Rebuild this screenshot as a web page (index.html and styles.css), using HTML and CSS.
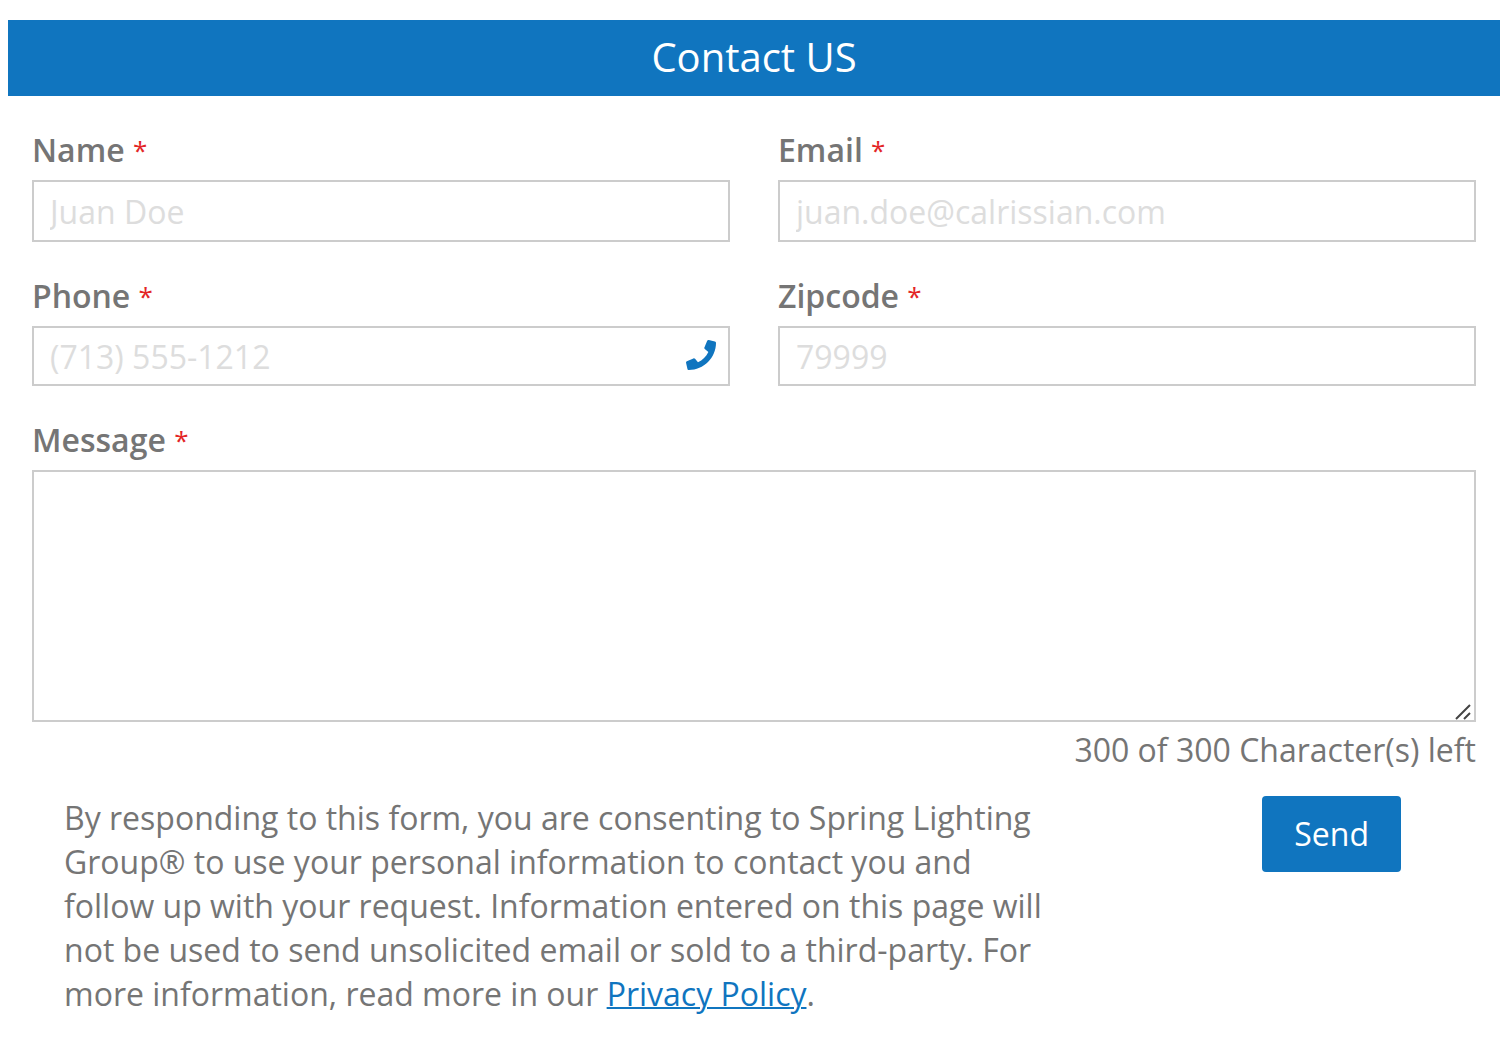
FILE: index.html
```html
<!DOCTYPE html>
<html lang="en">
<head>
<meta charset="utf-8">
<title>Contact US</title>
<link rel="stylesheet" href="styles.css">
</head>
<body>
<main class="contact">
  <h1 class="contact-title">Contact US</h1>
  <form class="contact-form">
    <div class="fields">
      <div class="field">
        <label class="label" for="name">Name <span class="required">*</span></label>
        <input class="control control-tall" id="name" type="text" placeholder="Juan Doe">
      </div>
      <div class="field">
        <label class="label" for="email">Email <span class="required">*</span></label>
        <input class="control control-tall" id="email" type="email" placeholder="juan.doe@calrissian.com">
      </div>
      <div class="field">
        <label class="label" for="phone">Phone <span class="required">*</span></label>
        <div class="control-wrap">
          <input class="control" id="phone" type="tel" placeholder="(713) 555-1212">
          <svg class="phone-icon" viewBox="0 0 512 512" aria-hidden="true"><path fill="currentColor" d="M493.400 24.600l-104-24c-11.300-2.600-22.900 3.300-27.500 13.900l-48 112c-4.200 9.800-1.400 21.300 6.900 28l60.600 49.600c-36 76.700-98.900 140.500-177.200 177.200l-49.600-60.600c-6.800-8.300-18.200-11.100-28-6.900l-112 48C3.900 366.500-2 378.100.6 389.400l24 104C27.100 504.200 36.700 512 48 512c256.100 0 464-207.500 464-464 0-11.200-7.700-20.900-18.600-23.400z"/></svg>
        </div>
      </div>
      <div class="field">
        <label class="label" for="zipcode">Zipcode <span class="required">*</span></label>
        <input class="control" id="zipcode" type="text" placeholder="79999">
      </div>
      <div class="field field-wide">
        <label class="label" for="message">Message <span class="required">*</span></label>
        <div class="control-wrap">
          <textarea class="control message" id="message"></textarea>
          <svg class="grip" viewBox="0 0 16 16" aria-hidden="true"><path d="M1 15L15 1M9 15L15 9" fill="none" stroke="#444" stroke-width="2"/></svg>
        </div>
        <p class="counter">300 of 300 Character(s) left</p>
      </div>
    </div>
    <div class="footer">
      <p class="consent">By responding to this form, you are consenting to Spring Lighting Group® to use your personal information to contact you and follow up with your request. Information entered on this page will not be used to send unsolicited email or sold to a third-party. For more information, read more in our <a class="link" href="#">Privacy Policy</a>.</p>
      <div class="actions"><button class="send" type="submit">Send</button></div>
    </div>
  </form>
</main>
</body>
</html>
```
FILE: styles.css
```css
* { box-sizing: border-box; }

body {
  margin: 0;
  padding: 20px 10px 0 8px;
  background: #fff;
  color: #757575;
  font: 32px/44px "Open Sans", sans-serif;
}

.contact-title {
  margin: 0;
  padding: 12px 12px 14px;
  background: #1075bf;
  color: #fff;
  font-size: 40px;
  font-weight: 400;
  line-height: 50px;
  text-align: center;
}

.contact-form { padding: 32px 24px 0; }

.fields {
  display: grid;
  grid-template-columns: 1fr 1fr;
  gap: 32px 48px;
}

.field-wide { grid-column: 1 / -1; }

.label {
  display: block;
  height: 52px;
  font-weight: 600;
}

.required {
  color: #e32526;
  font-size: 26px;
  font-weight: 400;
  line-height: 1;
  vertical-align: 2px;
}

.control-wrap { position: relative; }

.control {
  display: block;
  width: 100%;
  height: 60px;
  padding: 0 16px;
  border: 2px solid #ccc;
  border-radius: 0;
  background: #fff;
  color: inherit;
  font: inherit;
}

.control-tall { height: 62px; }

.control::placeholder { color: #ddd; opacity: 1; }

.phone-icon {
  position: absolute;
  top: 14px;
  right: 14px;
  width: 30px;
  height: 30px;
  color: #1075bf;
}

.message {
  height: 252px;
  resize: vertical;
}

.message::-webkit-resizer { background: transparent; }

.grip {
  position: absolute;
  right: 5px;
  bottom: 2px;
  width: 16px;
  height: 16px;
  pointer-events: none;
}

.counter {
  margin: 6px 0 0;
  text-align: right;
}

.footer {
  display: grid;
  grid-template-columns: 70% 20%;
  justify-content: space-between;
  padding-top: 24px;
}

.consent {
  margin: 0;
  padding-left: 32px;
}

.actions { text-align: center; }

.link {
  color: #1075bf;
  text-decoration-thickness: 2px;
}

.send {
  padding: 16px 32px;
  border: 0;
  border-radius: 4px;
  background: #1075bf;
  color: #fff;
  font: inherit;
}
```
